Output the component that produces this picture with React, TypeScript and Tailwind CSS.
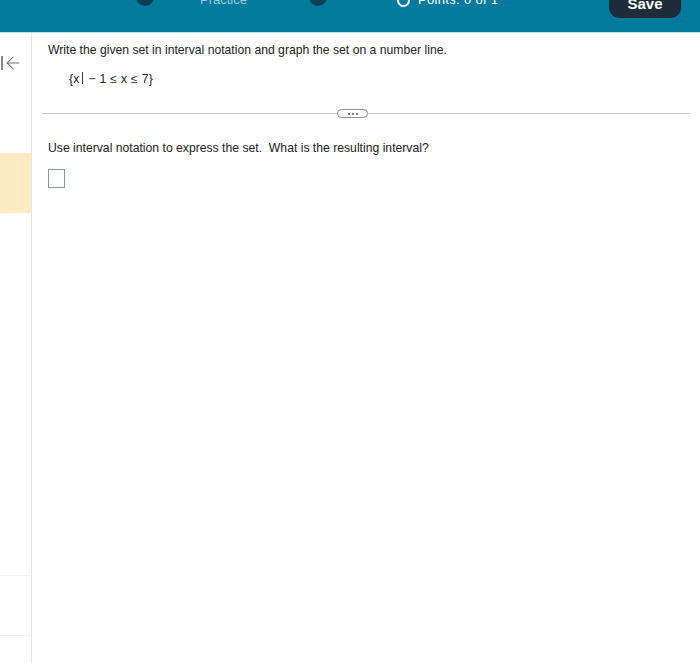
import { ArrowLeft } from 'lucide-react';

export default function App() {
  return (
    <div className="w-[700px] h-[663px] bg-white overflow-hidden flex flex-col" style={{ fontFamily: '"Liberation Sans", Arial, sans-serif' }}>
      <header className="h-[33px] shrink-0 bg-[#017a9d] border-b border-[#bfe3ee] overflow-hidden relative">
        <div className="flex items-end h-[20px] -mt-[14px]">
          <div className="ml-[136px] w-[18px] h-[18px] rounded-full bg-[#0d3f52]" />
          <span className="ml-[46px] text-[13px] text-[#9ccbd9] leading-none">Practice</span>
          <div className="ml-[62px] w-[18px] h-[18px] rounded-full bg-[#0d3f52]" />
          <div className="ml-[70px] w-[13px] h-[13px] rounded-full border-2 border-white mb-[-1px]" />
          <span className="ml-[8px] text-[13px] text-white leading-none tracking-wide">Points: 0 of 1</span>
        </div>
        <button className="absolute left-[609px] top-[-12px] w-[72px] h-[30px] rounded-[10px] bg-[#1d2c38] text-white text-[15px] leading-none font-bold flex items-end justify-center pb-[7px]">
          Save
        </button>
      </header>
      <div className="flex flex-1">
        <aside className="w-[32px] shrink-0 border-r border-[#e6e6e6] flex flex-col">
          <div className="h-[54px] flex items-center pt-[6px]">
            <div className="w-[2px] h-[14px] bg-[#888] ml-[1px]" />
            <ArrowLeft className="w-[20px] h-[20px] text-[#777]" strokeWidth={1.3} />
          </div>
          <div className="mt-[66px] h-[60px] bg-[#fcebc3]" />
          <div className="mt-[362px] h-px bg-[#f2f2f2]" />
          <div className="mt-[59px] h-px bg-[#f2f2f2]" />
        </aside>
        <main className="flex-1 pl-[16px] pr-[10px] text-[#222]">
          <p className="text-[12.2px] mt-[9px] leading-[16px]">Write the given set in interval notation and graph the set on a number line.</p>
          <p className="text-[12.2px] mt-[13px] ml-[21px] leading-[16px] tracking-[0.3px]">
            {'{x'}<span className="inline-block w-px h-[12px] bg-[#333] align-[-1px] mx-[2px]" />{'  \u2212 1 \u2264 x \u2264 7}'}
          </p>
          <div className="relative mt-[26px] ml-[-6px] h-px bg-[#c8c8c8]">
            <div className="absolute left-[295px] top-[-4px] w-[31px] h-[9px] rounded-full border border-[#8f8f8f] bg-white flex items-center justify-center gap-[2px]">
              <span className="w-[2px] h-[2px] rounded-full bg-[#555]" />
              <span className="w-[2px] h-[2px] rounded-full bg-[#555]" />
              <span className="w-[2px] h-[2px] rounded-full bg-[#555]" />
            </div>
          </div>
          <p className="text-[12.2px] mt-[26px] leading-[16px]">Use interval notation to express the set.&nbsp; What is the resulting interval?</p>
          <div className="mt-[13px] w-[17px] h-[19px] border border-[#8497b0]" />
        </main>
      </div>
    </div>
  );
}
